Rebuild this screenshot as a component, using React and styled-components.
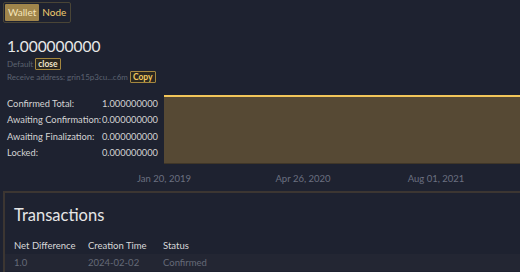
import React from "react";
import styled, { createGlobalStyle } from "styled-components";

const GlobalStyle = createGlobalStyle`
  html, body {
    margin: 0;
    padding: 0;
    background: #1e2230;
    font-family: Lato, "Open Sans", sans-serif;
    overflow: hidden;
  }
`;

const Page = styled.div`
  width: 520px;
  height: 272px;
  overflow: hidden;
  background: #1e2230;
  color: #dcdcdc;
`;

const ToggleGroup = styled.div`
  display: inline-flex;
  margin: 2px 0 0 3px;
  padding: 1px;
  border: 1px solid #4a4536;
  border-radius: 2px;
`;

const ToggleButton = styled.button`
  font-family: inherit;
  font-size: 10px;
  line-height: 17px;
  height: 17px;
  padding: 0 3px;
  border: none;
  border-radius: 1px;
  background: ${(p) => (p.$active ? "#a0854b" : "transparent")};
  color: ${(p) => (p.$active ? "#f4e4b8" : "#f0cb6e")};
  cursor: pointer;
`;

const Summary = styled.div`
  padding: 14px 0 0 7px;
`;

const Balance = styled.div`
  font-size: 15.5px;
  line-height: 19px;
  color: #e8e8e8;
`;

const MetaLine = styled.div`
  display: flex;
  align-items: center;
  gap: 2px;
  font-size: 8px;
  line-height: 12px;
  white-space: nowrap;
  color: #5d6271;
  margin-top: ${(p) => p.$gap || 0}px;
`;

const SmallButton = styled.button`
  font-family: inherit;
  font-size: 8.5px;
  line-height: 10px;
  padding: 0 2px;
  border: 1px solid #a4873f;
  border-radius: 1px;
  background: #2a2720;
  color: ${(p) => (p.$gold ? "#f2c95e" : "#f0e6cc")};
  font-weight: 700;
`;

const StatsRow = styled.div`
  display: flex;
  align-items: flex-start;
  margin-top: 13px;
`;

const StatsTable = styled.div`
  box-sizing: border-box;
  width: 164px;
  display: grid;
  grid-template-columns: auto auto;
  justify-content: space-between;
  row-gap: 2.3px;
  padding: 1px 6px 0 7px;
  font-size: 9.3px;
  line-height: 14px;
  white-space: nowrap;
  color: #d4d4d4;
`;

const StatValue = styled.span`
  text-align: right;
`;

const Chart = styled.div`
  flex: 1;
  height: 96px;
  margin-top: -1px;

  svg {
    overflow: visible;
    display: block;
  }
`;

const TxPanel = styled.section`
  margin: 0 0 0 3px;
  border-top: 2px solid #3c3632;
  border-left: 2px solid #3c3632;
  padding: 10px 0 0 9px;
  height: 100px;
`;

const TxTitle = styled.h2`
  margin: 0;
  font-size: 16.5px;
  font-weight: 400;
  line-height: 24px;
  color: #e6e6e6;
`;

const TxTable = styled.div`
  margin: 10px 0 0 -9px;
`;

const TxRow = styled.div`
  display: grid;
  grid-template-columns: 74px 75px 1fr;
  padding-left: 9px;
  font-size: 9.5px;
  line-height: 17px;
  white-space: nowrap;
  color: ${(p) => (p.$head ? "#d8d8d8" : "#656a78")};
  background: ${(p) => (p.$head ? "transparent" : "#232633")};
`;

const stats = [
  ["Confirmed Total:", "1.000000000"],
  ["Awaiting Confirmation:", "0.000000000"],
  ["Awaiting Finalization:", "0.000000000"],
  ["Locked:", "0.000000000"],
];

function BalanceChart() {
  return (
    <Chart>
      <svg width="356" height="96" viewBox="0 0 356 96">
        <rect x="0" y="1" width="356" height="68" fill="#564934" />
        <line x1="0" y1="68.5" x2="356" y2="68.5" stroke="#3f3628" strokeWidth="1" />
        <line x1="0" y1="1" x2="356" y2="1" stroke="#f3c65a" strokeWidth="2" />
        <g fill="#6b7080" fontSize="9.5" fontFamily="Lato, sans-serif" textAnchor="middle">
          <text x="0" y="87">Jan 20, 2019</text>
          <text x="139" y="87">Apr 26, 2020</text>
          <text x="272" y="87">Aug 01, 2021</text>
        </g>
      </svg>
    </Chart>
  );
}

export default function App() {
  return (
    <Page>
      <GlobalStyle />
      <ToggleGroup>
        <ToggleButton $active>Wallet</ToggleButton>
        <ToggleButton>Node</ToggleButton>
      </ToggleGroup>
      <Summary>
        <Balance>1.000000000</Balance>
        <MetaLine $gap={2}>
          Default <SmallButton>close</SmallButton>
        </MetaLine>
        <MetaLine $gap={1}>
          Receive address: grin15p3cu...c6m <SmallButton $gold>Copy</SmallButton>
        </MetaLine>
      </Summary>
      <StatsRow>
        <StatsTable>
          {stats.map(([label, value]) => (
            <React.Fragment key={label}>
              <span>{label}</span>
              <StatValue>{value}</StatValue>
            </React.Fragment>
          ))}
        </StatsTable>
        <BalanceChart />
      </StatsRow>
      <TxPanel>
        <TxTitle>Transactions</TxTitle>
        <TxTable>
          <TxRow $head>
            <span>Net Difference</span>
            <span>Creation Time</span>
            <span>Status</span>
          </TxRow>
          <TxRow>
            <span>1.0</span>
            <span>2024-02-02</span>
            <span>Confirmed</span>
          </TxRow>
        </TxTable>
      </TxPanel>
    </Page>
  );
}
